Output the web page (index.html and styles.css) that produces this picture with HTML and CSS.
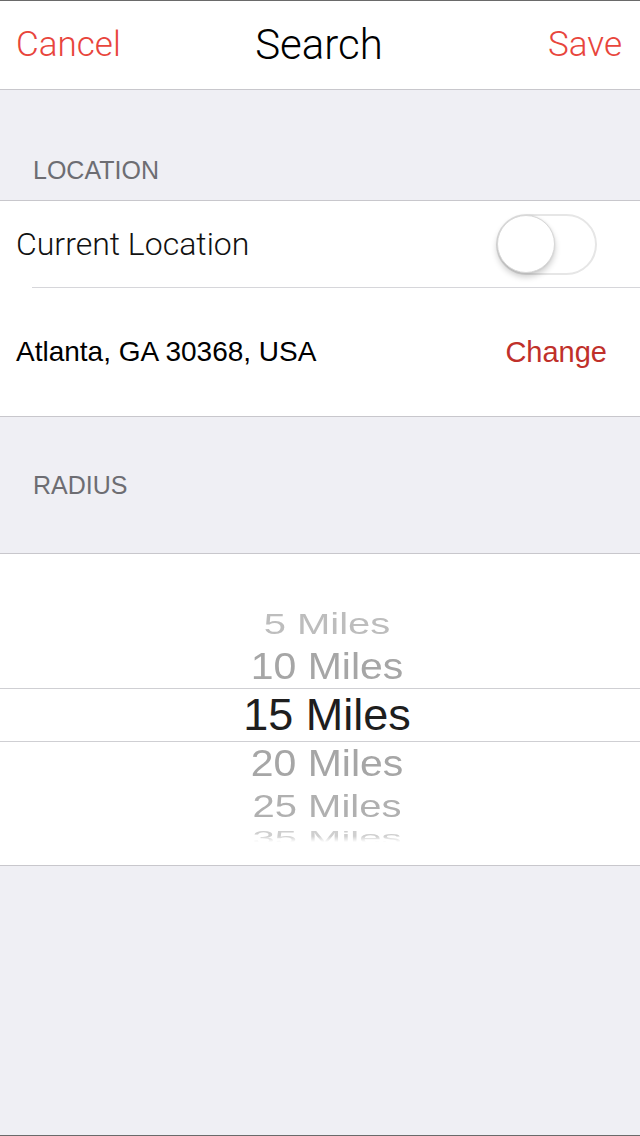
FILE: index.html
```html
<!DOCTYPE html>
<html lang="en">
<head>
<meta charset="utf-8">
<title>Search</title>
<link rel="stylesheet" href="styles.css">
</head>
<body>
<div class="screen">
  <header class="nav">
    <span class="nav-btn left">Cancel</span>
    <span class="nav-title">Search</span>
    <span class="nav-btn right">Save</span>
  </header>

  <div class="section-header loc-header"><span class="section-label">LOCATION</span></div>

  <section class="group">
    <div class="row row-toggle">
      <span class="row-title">Current Location</span>
      <span class="switch"><span class="knob"></span></span>
    </div>
    <div class="row row-address">
      <span class="address">Atlanta, GA 30368, USA</span>
      <span class="change">Change</span>
    </div>
  </section>

  <div class="section-header radius-header"><span class="section-label">RADIUS</span></div>

  <section class="picker">
    <div class="pick i5"><span>5 Miles</span></div>
    <div class="pick i10"><span>10 Miles</span></div>
    <div class="pick sel"><span>15 Miles</span></div>
    <div class="pick i20"><span>20 Miles</span></div>
    <div class="pick i25"><span>25 Miles</span></div>
    <div class="pick i35"><span>35 Miles</span></div>
  </section>

  <div class="filler"></div>
</div>
</body>
</html>
```

FILE: styles.css
```css
* { box-sizing: border-box; }

html, body {
  margin: 0;
  padding: 0;
}

body {
  background: #efeff4;
  font-family: "Liberation Sans", Arial, sans-serif;
  color: #000;
}

.screen {
  height: 1136px;
  display: flex;
  flex-direction: column;
  border-top: 1px solid #6a6a6a;
  border-bottom: 1px solid #6a6a6a;
  background: #efeff4;
  overflow: hidden;
}

/* Navigation bar */
.nav {
  height: 89px;
  flex: none;
  background: #fff;
  border-bottom: 1px solid #c8c7cc;
  display: grid;
  grid-template-columns: 1fr auto 1fr;
  align-items: center;
  padding: 0 18px 0 16px;
}

.nav-btn {
  font-family: Roboto, "Liberation Sans", sans-serif;
  font-weight: 300;
  font-size: 35px;
  color: #e8453c;
  line-height: 40px;
}

.nav-btn.right { justify-self: end; }

.nav-title {
  font-family: Roboto, "Liberation Sans", sans-serif;
  font-weight: 300;
  font-size: 42px;
  color: #000;
  line-height: 44px;
}

/* Section headers */
.section-header {
  flex: none;
  display: flex;
  padding-left: 33px;
}

.loc-header {
  height: 110px;
  align-items: flex-end;
  padding-bottom: 15px;
}

.radius-header {
  height: 136px;
  align-items: center;
}

.section-label {
  font-size: 25px;
  line-height: 30px;
  color: #6d6d72;
}

/* Grouped cells */
.group {
  flex: none;
  background: #fff;
  border-top: 1px solid #c8c7cc;
  border-bottom: 1px solid #c8c7cc;
}

.row {
  display: flex;
  align-items: center;
  justify-content: space-between;
  padding-left: 16px;
}

.row-toggle {
  height: 87px;
  padding-right: 43px;
  border-bottom: 1px solid #d6d6da;
  margin-left: 32px;
  padding-left: 0;
}

.row-toggle .row-title {
  margin-left: -16px;
}

.row-title {
  font-family: Roboto, "Liberation Sans", sans-serif;
  font-weight: 300;
  font-size: 32px;
  color: #111;
}

.switch {
  width: 101px;
  height: 61px;
  border-radius: 31px;
  border: 2px solid #e6e6e6;
  background: #fff;
  display: flex;
  align-items: center;
  padding: 0;
}

.knob {
  width: 58px;
  height: 58px;
  border-radius: 50%;
  background: #fff;
  margin-left: -1px;
  border: 1px solid #d8d8d8;
  box-shadow: 0 4px 6px rgba(0, 0, 0, 0.2), 0 0 2px rgba(0, 0, 0, 0.1);
}

.row-address {
  height: 128px;
  padding-right: 33px;
}

.address {
  font-size: 28px;
  color: #000;
}

.change {
  font-size: 29px;
  color: #c0302a;
}

/* Picker wheel */
.picker {
  flex: none;
  height: 313px;
  background: #fff;
  border-top: 1px solid #c8c7cc;
  border-bottom: 1px solid #c8c7cc;
  padding-top: 50px;
  display: flex;
  flex-direction: column;
  overflow: hidden;
}

.pick {
  flex: none;
  display: flex;
  justify-content: center;
  align-items: center;
  white-space: nowrap;
  padding-left: 14px;
}

.pick span {
  display: block;
  transform-origin: center center;
}

.i5 { height: 40px; }
.i5 span { font-size: 40px; line-height: 40px; color: #bdbdbd; transform: scaleY(0.74); }

.i10 { height: 44px; }
.i10 span { font-size: 41px; line-height: 44px; color: #a6a6a6; transform: scaleY(0.9); }

.sel {
  height: 54px;
  border-top: 1px solid #cfcfd3;
  border-bottom: 1px solid #cfcfd3;
}
.sel span { font-size: 45px; line-height: 52px; color: #1e1e1e; }

.i20 { height: 42px; }
.i20 span { font-size: 41px; line-height: 42px; color: #a6a6a6; transform: scaleY(0.9); }

.i25 { height: 44px; }
.i25 span { font-size: 40px; line-height: 44px; color: #b0b0b0; transform: scaleY(0.77); }

.i35 { height: 20px; }
.i35 span {
  font-size: 40px;
  line-height: 40px;
  color: #cfcfcf;
  transform: scaleY(0.46);
  -webkit-mask-image: linear-gradient(to bottom, #000 40%, transparent 72%);
  mask-image: linear-gradient(to bottom, #000 40%, transparent 72%);
}

.filler {
  flex: 1;
  background: #efeff4;
}
```
